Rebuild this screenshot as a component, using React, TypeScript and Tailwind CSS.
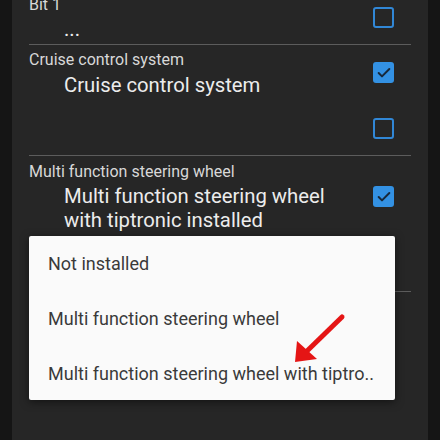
import { Check } from 'lucide-react'

function Box({ checked }: { checked?: boolean }) {
  if (checked) {
    return (
      <div className="w-[21px] h-[21px] rounded-[3px] bg-[#3391e3] flex items-center justify-center">
        <Check size={16} strokeWidth={3} className="text-[#17283a]" />
      </div>
    )
  }
  return <div className="w-[21px] h-[21px] rounded-[3px] border-2 border-[#3187d6]" />
}

export default function App() {
  return (
    <div className="relative w-[440px] h-[440px] overflow-hidden bg-[#151515] flex font-['Roboto',sans-serif]">
      <div className="ml-[12px] w-[416px] h-full bg-[#262626] px-[17px] overflow-hidden">
        {/* Bit 1 */}
        <div className="-mt-[5px] flex border-b border-[#5c5c5c]">
          <div className="flex-1">
            <div className="h-[20px] text-[16px] leading-[20px] text-[#d8d8d8]">Bit 1</div>
            <div className="mt-[2px] mb-[3px] pl-[35px] h-[24px] text-[20.3px] leading-[24px] text-[#ececec]">...</div>
          </div>
          <div className="mt-[12px] mr-[17px]">
            <Box />
          </div>
        </div>

        {/* Cruise control */}
        <div className="h-[111px] flex border-b border-[#5c5c5c]">
          <div className="flex-1 pt-[5px]">
            <div className="h-[20px] text-[16px] leading-[20px] text-[#d8d8d8]">Cruise control system</div>
            <div className="mt-[3px] pl-[35px] text-[20.3px] leading-[24px] text-[#ececec]">Cruise control system</div>
          </div>
          <div className="mt-[17px] mr-[17px] flex flex-col gap-[35px]">
            <Box checked />
            <Box />
          </div>
        </div>

        {/* Steering wheel */}
        <div className="h-[136px] flex border-b border-[#5c5c5c]">
          <div className="flex-1 pt-[6px]">
            <div className="h-[20px] text-[16px] leading-[20px] text-[#d8d8d8]">Multi function steering wheel</div>
            <div className="mt-[2px] pl-[35px] pr-[20px] text-[20.3px] leading-[24px] text-[#ececec]">
              Multi function steering wheel with tiptronic installed
            </div>
          </div>
          <div className="mt-[30px] mr-[17px]">
            <Box checked />
          </div>
        </div>
      </div>

      {/* dropdown menu */}
      <div className="absolute left-[29px] top-[236px] w-[366px] h-[164px] bg-[#fafafa] rounded-[2px] shadow-[0_2px_8px_rgba(0,0,0,0.5)] flex flex-col pl-[19px] text-[18px] text-[#3a3a3a]">
        <div className="h-[55px] pt-[16px] leading-[24px]">Not installed</div>
        <div className="h-[55px] pt-[16px] leading-[24px]">Multi function steering wheel</div>
        <div className="h-[54px] pt-[16px] leading-[24px]">Multi function steering wheel with tiptro..</div>
      </div>

      {/* red arrow */}
      <svg className="absolute left-[285px] top-[305px]" width="70" height="70" viewBox="0 0 70 70">
        <line x1="57" y1="12" x2="22" y2="46" stroke="#e51515" strokeWidth="5" strokeLinecap="round" />
        <polygon points="10,57 12,36 32,54" fill="#e51515" />
      </svg>
    </div>
  )
}
